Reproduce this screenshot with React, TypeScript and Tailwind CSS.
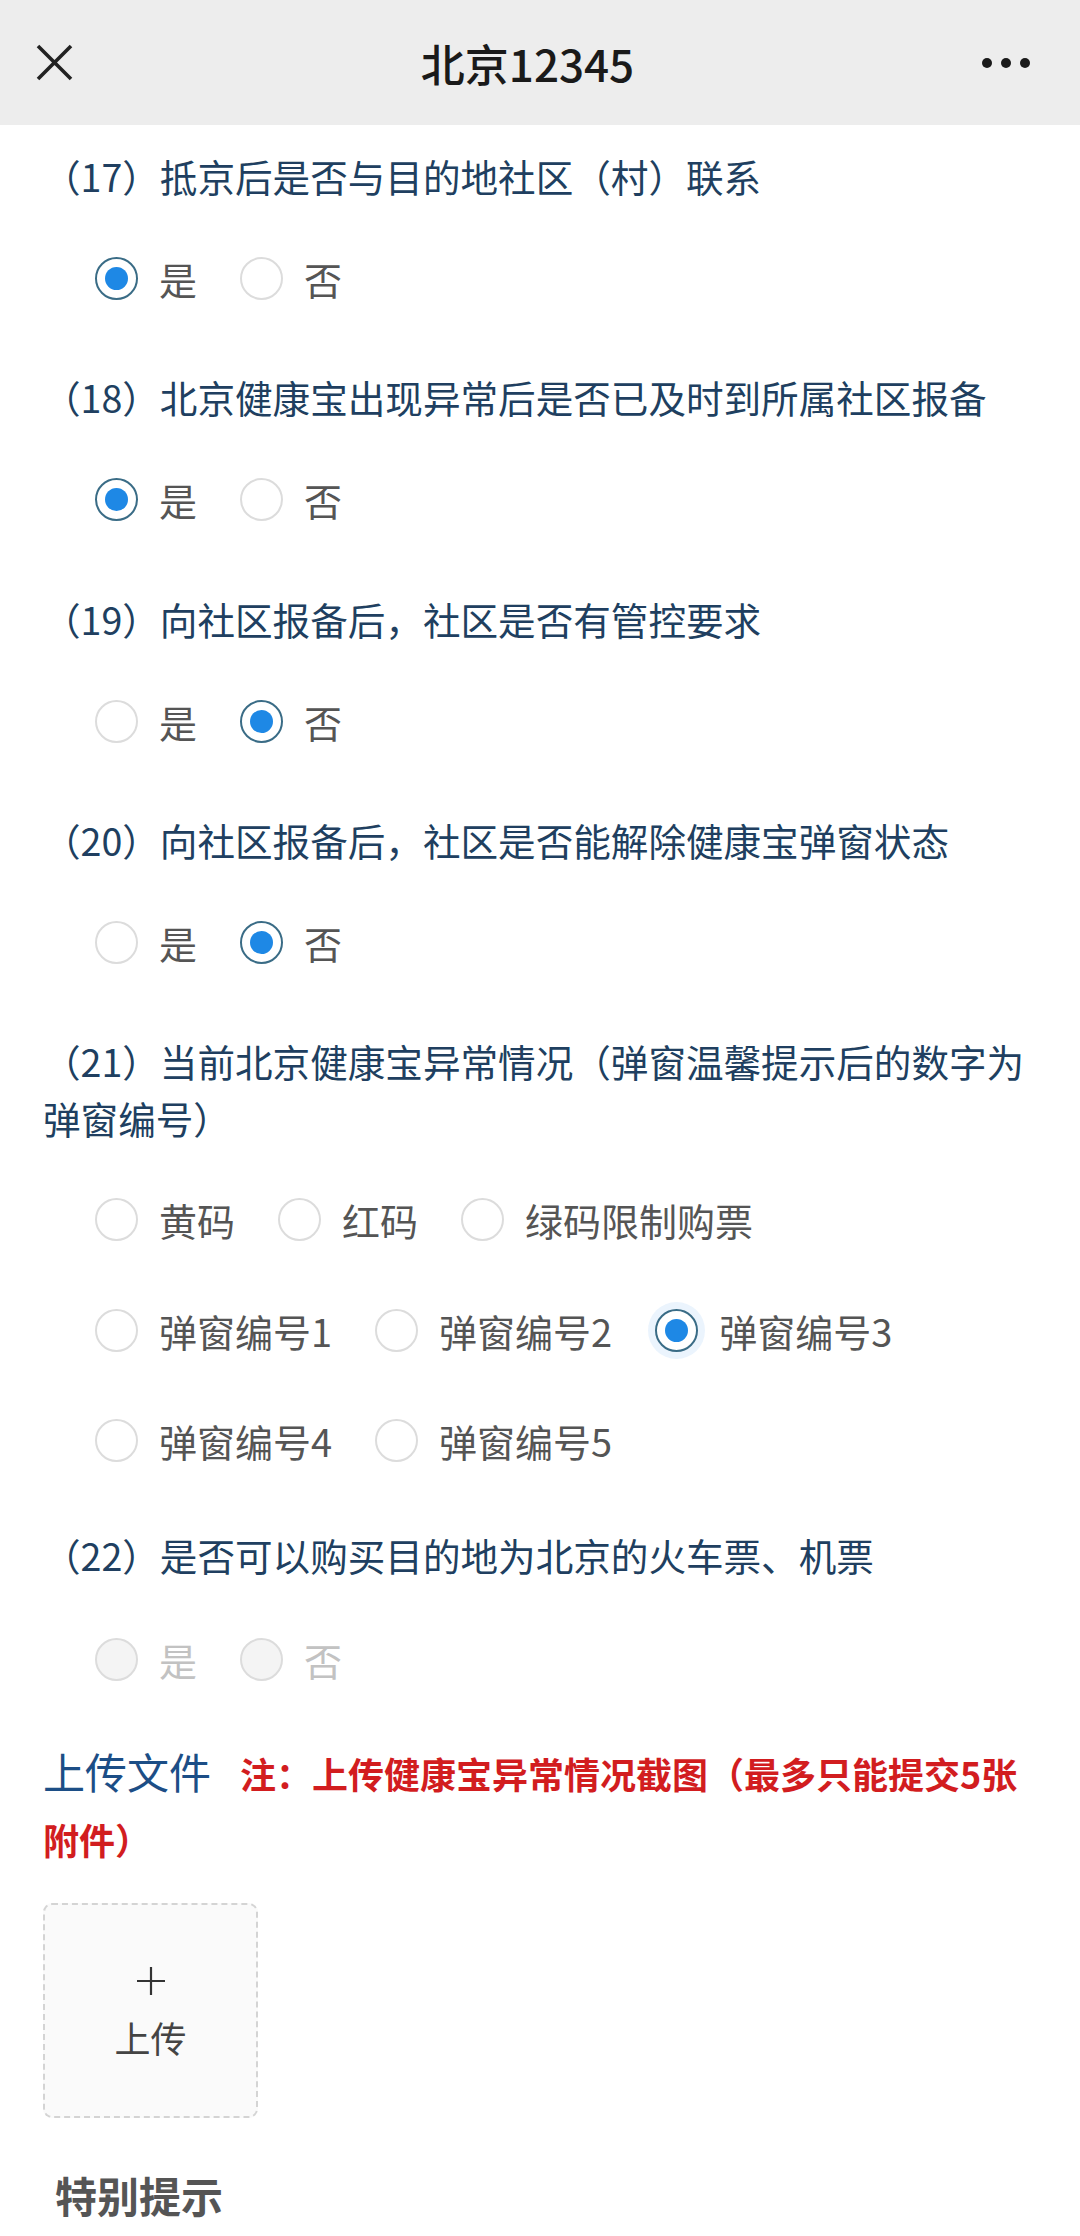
import React from "react";

type RState = "on" | "off" | "disabled" | "focus";

function Radio({ state }: { state: RState }) {
  if (state === "on" || state === "focus") {
    return (
      <span
        className={
          "relative flex h-[43px] w-[43px] shrink-0 items-center justify-center rounded-full border-2 border-[#3a6c86] bg-white " +
          (state === "focus" ? "shadow-[0_0_0_7px_rgba(30,136,229,0.09)]" : "")
        }
      >
        <span className="block h-[23px] w-[23px] rounded-full bg-[#1e88e5]" />
      </span>
    );
  }
  if (state === "disabled") {
    return <span className="block h-[43px] w-[43px] shrink-0 rounded-full border-2 border-[#dcdcdc] bg-[#f4f4f4]" />;
  }
  return <span className="block h-[43px] w-[43px] shrink-0 rounded-full border-2 border-[#dcdcdc] bg-white" />;
}

function Option({ label, state }: { label: string; state: RState }) {
  return (
    <div className="mr-[43px] flex items-center">
      <Radio state={state} />
      <span
        className={
          "ml-[21px] text-[38px] leading-[57px] whitespace-nowrap " +
          (state === "disabled" ? "text-[#c2c2c2]" : "text-[#555555]")
        }
      >
        {label}
      </span>
    </div>
  );
}

function Title({ children, className = "" }: { children: React.ReactNode; className?: string }) {
  return <div className={"text-[37.6px] leading-[57px] text-[#203f60] " + className}>{children}</div>;
}

function Row({ children, className = "" }: { children: React.ReactNode; className?: string }) {
  return <div className={"flex h-[57px] items-center pl-[52px] " + className}>{children}</div>;
}

export default function App() {
  return (
    <div className="min-h-[2236px] w-[1080px] bg-white font-['Noto_Sans_CJK_SC','Noto_Sans',sans-serif]">
      {/* header */}
      <div className="flex h-[125px] items-center justify-between bg-[#ededed] pl-[36px] pr-[50px]">
        <svg width="37" height="37" viewBox="0 0 37 37" className="shrink-0">
          <path d="M2 2 L35 35 M35 2 L2 35" stroke="#222222" strokeWidth="3.6" strokeLinecap="butt" fill="none" />
        </svg>
        <div className="text-[44px] font-medium leading-none text-[#1a1a1a]">北京12345</div>
        <div className="flex items-center gap-[9px]">
          <span className="block h-[10px] w-[10px] rounded-full bg-[#1a1a1a]" />
          <span className="block h-[10px] w-[10px] rounded-full bg-[#1a1a1a]" />
          <span className="block h-[10px] w-[10px] rounded-full bg-[#1a1a1a]" />
        </div>
      </div>

      <div className="pl-[43px] pr-[36px] pt-[22px]">
        {/* 17 */}
        <Title>（17）抵京后是否与目的地社区（村）联系</Title>
        <Row className="mt-[46px]">
          <Option label="是" state="on" />
          <Option label="否" state="off" />
        </Row>

        {/* 18 */}
        <Title className="mt-[61px]">（18）北京健康宝出现异常后是否已及时到所属社区报备</Title>
        <Row className="mt-[46px]">
          <Option label="是" state="on" />
          <Option label="否" state="off" />
        </Row>

        {/* 19 */}
        <Title className="mt-[62px]">（19）向社区报备后，社区是否有管控要求</Title>
        <Row className="mt-[46px]">
          <Option label="是" state="off" />
          <Option label="否" state="on" />
        </Row>

        {/* 20 */}
        <Title className="mt-[61px]">（20）向社区报备后，社区是否能解除健康宝弹窗状态</Title>
        <Row className="mt-[46px]">
          <Option label="是" state="off" />
          <Option label="否" state="on" />
        </Row>

        {/* 21 */}
        <Title className="mt-[61px]">（21）当前北京健康宝异常情况（弹窗温馨提示后的数字为弹窗编号）</Title>
        <Row className="mt-[45px]">
          <Option label="黄码" state="off" />
          <Option label="红码" state="off" />
          <Option label="绿码限制购票" state="off" />
        </Row>
        <Row className="mt-[54px]">
          <Option label="弹窗编号1" state="off" />
          <Option label="弹窗编号2" state="off" />
          <Option label="弹窗编号3" state="focus" />
        </Row>
        <Row className="mt-[53px]">
          <Option label="弹窗编号4" state="off" />
          <Option label="弹窗编号5" state="off" />
        </Row>

        {/* 22 */}
        <Title className="mt-[57px]">（22）是否可以购买目的地为北京的火车票、机票</Title>
        <Row className="mt-[48px]">
          <Option label="是" state="disabled" />
          <Option label="否" state="disabled" />
        </Row>

        {/* upload */}
        <p className="mt-[50px] text-[36px] leading-[66px]">
          <span className="text-[42px] leading-[66px] text-[#1c4e86]">上传文件</span>
          <span className="ml-[29px] text-[36px] font-bold leading-[66px] text-[#d21d1f]">
            注：上传健康宝异常情况截图（最多只能提交5张附件）
          </span>
        </p>

        <div className="mt-[31px] flex h-[215px] w-[215px] flex-col items-center justify-center rounded-[9px] border-2 border-dashed border-[#d4d4d4] bg-[#fafafa]">
          <svg width="30" height="30" viewBox="0 0 30 30">
            <path d="M15 1 V29 M1 15 H29" stroke="#333333" strokeWidth="2.2" fill="none" />
          </svg>
          <span className="mt-[23px] text-[36px] leading-[36px] text-[#444444]">上传</span>
        </div>

        <div className="mt-[48px] pl-[12px] text-[42px] font-bold leading-[57px] text-[#555555]">特别提示</div>
      </div>
    </div>
  );
}
